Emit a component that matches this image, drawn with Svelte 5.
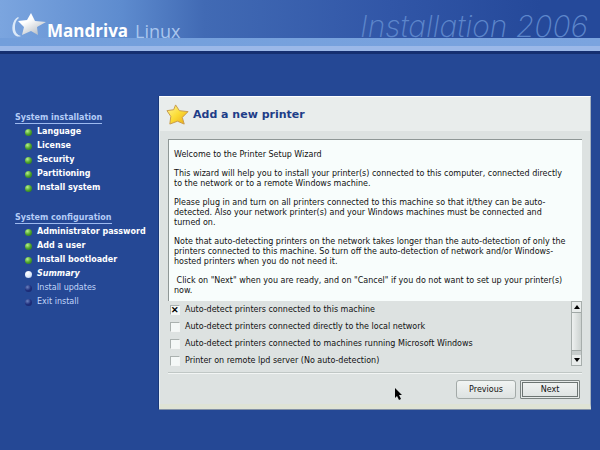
<script lang="ts">
  type Step = { name: string; state: 'done' | 'current' | 'todo' };

  const sections: { title: string; steps: Step[] }[] = [
    {
      title: 'System installation',
      steps: [
        { name: 'Language', state: 'done' },
        { name: 'License', state: 'done' },
        { name: 'Security', state: 'done' },
        { name: 'Partitioning', state: 'done' },
        { name: 'Install system', state: 'done' }
      ]
    },
    {
      title: 'System configuration',
      steps: [
        { name: 'Administrator password', state: 'done' },
        { name: 'Add a user', state: 'done' },
        { name: 'Install bootloader', state: 'done' },
        { name: 'Summary', state: 'current' },
        { name: 'Install updates', state: 'todo' },
        { name: 'Exit install', state: 'todo' }
      ]
    }
  ];

  const paragraphs = [
    'Welcome to the Printer Setup Wizard',
    'This wizard will help you to install your printer(s) connected to this computer, connected directly\nto the network or to a remote Windows machine.',
    'Please plug in and turn on all printers connected to this machine so that it/they can be auto-\ndetected. Also your network printer(s) and your Windows machines must be connected and\nturned on.',
    'Note that auto-detecting printers on the network takes longer than the auto-detection of only the\nprinters connected to this machine. So turn off the auto-detection of network and/or Windows-\nhosted printers when you do not need it.',
    ' Click on "Next" when you are ready, and on "Cancel" if you do not want to set up your printer(s)\nnow.'
  ];

  let options = $state([
    { label: 'Auto-detect printers connected to this machine', checked: true },
    { label: 'Auto-detect printers connected directly to the local network', checked: false },
    { label: 'Auto-detect printers connected to machines running Microsoft Windows', checked: false },
    { label: 'Printer on remote lpd server (No auto-detection)', checked: false }
  ]);

  let list: HTMLElement;

  function scrollList(amount: number) {
    list.scrollTop += amount;
  }
</script>

<div class="page">
  <header class="banner">
    <div class="brand">
      <svg class="logo" viewBox="0 0 36 26" aria-hidden="true">
        <defs>
          <linearGradient id="silver" x1="0" y1="0" x2="0.7" y2="1">
            <stop offset="0.4" stop-color="#fff" />
            <stop offset="1" stop-color="#b9bfc6" />
          </linearGradient>
        </defs>
        <path d="M7 5C1 8 0 18 3 22c2 3 5 3 7 2-4-1-6-4-6-8 0-5 1-8 4-10z" fill="#dce9f8" />
        <path d="M20 1l4 8 11 1-9 5 1 8-7-4-9 4 2-8-6-6 9-1z" fill="url(#silver)" />
      </svg>
      <span class="name">Mandriva</span>
      <span class="os">Linux</span>
    </div>
    <div class="release">Installation 2006</div>
  </header>

  <div class="body">
    <nav>
      {#each sections as section}
        <section>
          <h2>{section.title}</h2>
          <ul>
            {#each section.steps as step}
              <li class={step.state}><span class="bullet"></span>{step.name}</li>
            {/each}
          </ul>
        </section>
      {/each}
    </nav>

    <main>
      <div class="title">
        <svg viewBox="0 0 24 24" aria-hidden="true">
          <defs>
            <linearGradient id="gold" x1="0" y1="0" x2="1" y2="1">
              <stop offset="0" stop-color="#fff59a" />
              <stop offset="0.5" stop-color="#fbdc35" />
              <stop offset="1" stop-color="#e9a616" />
            </linearGradient>
          </defs>
          <path
            d="M10 2l4 6 9 1-6 6 2 7-7-3-8 3 1-8-4-6 7-1z"
            fill="url(#gold)"
            stroke="#c79a4a"
            stroke-width="1"
            stroke-linejoin="round"
          />
        </svg>
        <h1>Add a new printer</h1>
      </div>

      <div class="content">
        <div class="message">
          {#each paragraphs as text}
            <p>{text}</p>
          {/each}
        </div>

        <div class="choices">
          <div class="options" bind:this={list}>
            {#each options as option}
              <label>
                <input type="checkbox" bind:checked={option.checked} />
                {option.label}
              </label>
            {/each}
          </div>
          <div class="scrollbar">
            <button aria-label="Scroll up" onclick={() => scrollList(-17)}>
              <svg viewBox="0 0 8 8"><path d="M1 6h6L4 2z" /></svg>
            </button>
            <div class="track"><div class="thumb"></div></div>
            <button aria-label="Scroll down" onclick={() => scrollList(17)}>
              <svg viewBox="0 0 8 8"><path d="M1 2h6L4 6z" /></svg>
            </button>
          </div>
        </div>

        <div class="actions">
          <button>Previous</button>
          <button class="default">Next</button>
        </div>
      </div>
    </main>
  </div>

  <svg class="pointer" viewBox="0 0 8 13" aria-hidden="true">
    <path d="M1 0v10l2-2 2 4 2-1-2-4h3z" />
  </svg>
</div>

<style>
  :global(body) {
    margin: 0;
    background: #254895;
  }

  .page {
    position: relative;
    min-height: 100vh;
    background: #254895;
    font-family: "DejaVu Sans", sans-serif;
    font-size: 8px;
  }

  h1, h2, p, ul {
    margin: 0;
    padding: 0;
  }

  .banner {
    display: flex;
    justify-content: space-between;
    align-items: flex-end;
    box-sizing: border-box;
    height: 54px;
    padding: 0 12px 13px 11px;
    border-bottom: 3px solid #152f70;
    background:
      linear-gradient(#9bb8e8, #9bb8e8) bottom / 100% 5px no-repeat,
      linear-gradient(90deg, #729edb, #7ba4df) bottom / 100% 13px no-repeat,
      linear-gradient(90deg, #7ba5df 0%, #5e8ccf 20%, #416ab4 34%, #3156a7 65%, #25499a 90%);
  }

  .brand {
    display: flex;
    align-items: flex-end;
    color: #fff;
    font-family: "Open Sans", sans-serif;
    font-size: 17px;
    line-height: 14px;
  }

  .logo {
    width: 36px;
    height: 26px;
  }

  .name {
    margin-right: 7px;
    font-weight: 700;
  }

  .os {
    color: #a9c6ee;
    font-size: 18px;
  }

  .release {
    color: #5d86cb;
    font-family: Inter, sans-serif;
    font-size: 30px;
    font-style: italic;
    font-weight: 200;
    line-height: 24px;
  }

  .body {
    display: flex;
    align-items: flex-start;
    padding: 42px 9px 0 15px;
  }

  nav {
    flex: 0 0 144px;
    min-width: 0;
    padding-top: 16px;
    color: #fff;
  }

  section {
    margin-bottom: 17px;
  }

  h2 {
    width: max-content;
    margin-bottom: 1px;
    border-bottom: 1px solid #9dbaf0;
    color: #b4ccf7;
    font-size: 8px;
    line-height: 11px;
  }

  ul {
    list-style: none;
  }

  li {
    display: flex;
    align-items: center;
    gap: 5px;
    padding-left: 10px;
    font-weight: 700;
    line-height: 14px;
    white-space: nowrap;
  }

  .bullet {
    width: 7px;
    height: 7px;
    border-radius: 50%;
    background: radial-gradient(circle at 35% 30%, #b9f08c, #4fa52c 50%, #1c6320);
  }

  .current {
    font-style: italic;
  }

  .current .bullet {
    background: radial-gradient(circle at 35% 30%, #fff, #dbe7f8 60%, #8fa9d8);
  }

  .todo {
    color: #c3d7fa;
    font-weight: 400;
  }

  .todo .bullet {
    background: radial-gradient(circle at 35% 30%, #6b82c0, #1f2f7c 50%, #152467);
  }

  main {
    flex: 1;
    min-width: 0;
    border: 1px solid #a5b1bf;
    border-top-color: #fff;
    border-left-color: #e6eef5;
    border-bottom: 5px solid #dfe3d5;
    background: #dde2e1;
    box-shadow: 0 1px #8290a6, -1px 0 #1a3879;
    color: #111;
  }

  .title {
    display: flex;
    align-items: center;
    gap: 4px;
    height: 34px;
    padding-left: 6px;
    background: #e9edec;
  }

  .title svg {
    width: 23px;
    height: 23px;
  }

  h1 {
    color: #1e3d88;
    font-size: 11px;
  }

  .content {
    padding: 8px 8px 5px;
  }

  .message {
    padding: 10px 5px 5px;
    border-top: 1px solid #8f9796;
    border-left: 1px solid #8f9796;
    background: #f8fdfc;
    line-height: 10px;
    white-space: pre-wrap;
  }

  .message p + p {
    margin-top: 9px;
  }

  .choices {
    display: flex;
    height: 65px;
    padding-bottom: 6px;
    border-bottom: 1px solid #c0c7c5;
    box-shadow: 0 1px #f2f5f4;
  }

  .options {
    flex: 1;
    overflow: hidden;
  }

  label {
    display: flex;
    align-items: center;
    gap: 5px;
    height: 17px;
  }

  input {
    display: grid;
    place-items: center;
    box-sizing: border-box;
    width: 10px;
    height: 10px;
    margin: 0 0 0 2px;
    border: 1px solid #f4f6f5;
    border-top-color: #aab1af;
    border-left-color: #aab1af;
    appearance: none;
    background: #f4f8f7;
  }

  input:checked::before {
    content: '✕';
    font-size: 9px;
    font-weight: 700;
    line-height: 8px;
  }

  .scrollbar {
    display: flex;
    flex-direction: column;
    box-sizing: border-box;
    width: 11px;
    border: 1px solid #a7aeac;
  }

  .scrollbar button {
    display: grid;
    place-items: center;
    height: 10px;
    padding: 0;
    border: 0;
    background: #e8eceb;
  }

  .scrollbar svg {
    width: 8px;
    height: 8px;
  }

  .track {
    flex: 1;
    background: #c6cccb;
  }

  .thumb {
    box-sizing: border-box;
    height: 90%;
    border: 1px solid #9fa7a5;
    border-width: 1px 0;
    background: linear-gradient(90deg, #eef1f0, #ccd2d0);
  }

  .actions {
    display: flex;
    justify-content: flex-end;
    gap: 4px;
    padding: 7px 2px 0 0;
  }

  .actions button {
    box-sizing: border-box;
    width: 60px;
    height: 19px;
    padding: 0;
    border: 1px solid #a3aaa8;
    border-radius: 3px;
    background: linear-gradient(#f1f4f3, #dde2e1);
    color: #111;
    font: inherit;
  }

  .actions .default {
    border-color: #7c8482;
    border-radius: 1px;
    box-shadow: inset 0 0 0 1px #e6eae9, inset 0 0 0 2px #6c7472;
  }

  .pointer {
    position: absolute;
    top: 388px;
    left: 394px;
    width: 8px;
    height: 13px;
  }
</style>
